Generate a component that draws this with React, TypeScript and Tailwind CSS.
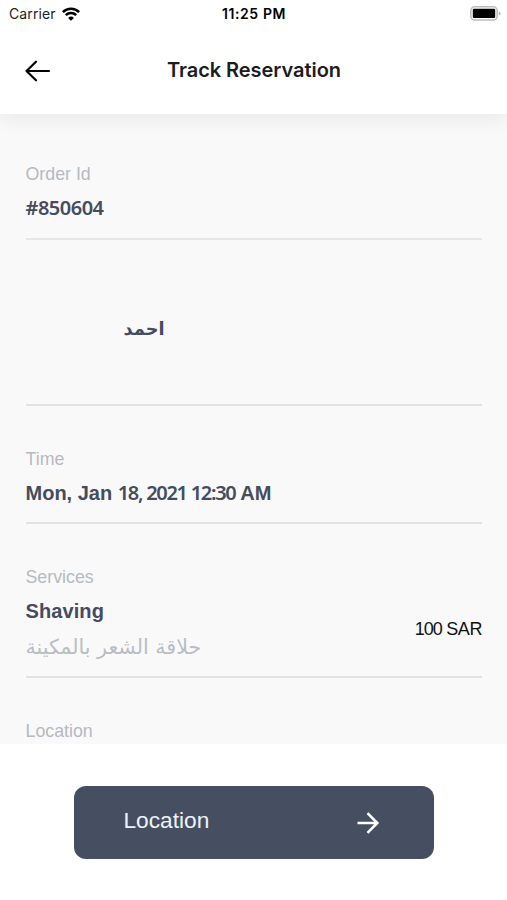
import type { ReactNode } from "react";

function Label({ children }: { children: ReactNode }) {
  return <p className="text-[17.8px] leading-6 text-[#b5b9c2]">{children}</p>;
}

function StatusBar() {
  return (
    <div className="grid h-[27px] grid-cols-3 items-center pr-[6px] pl-[9px] font-['Inter',sans-serif] text-black">
      <div className="flex items-center gap-[6px]">
        <span className="text-[14px] tracking-[0.1px] text-[#222222]">Carrier</span>
        <svg width="18" height="14" viewBox="0 0 18 14" fill="none" stroke="currentColor" strokeWidth="2.5">
          <path d="M.9 5.1a11.6 11.6 0 0 1 16.2 0" />
          <path d="M3.8 8.2a7.4 7.4 0 0 1 10.4 0" />
          <path d="M9 13.8 6.1 10.9a4.1 4.1 0 0 1 5.8 0Z" fill="currentColor" stroke="none" />
        </svg>
      </div>
      <span className="mr-[2px] text-center text-[14px] font-semibold tracking-[0.6px] whitespace-nowrap">11:25 PM</span>
      <svg className="justify-self-end" width="31" height="15" viewBox="0 0 31 15">
        <rect x=".8" y=".8" width="26.4" height="13.2" rx="4" fill="#fff" stroke="#bdbdbd" strokeWidth="1.6" />
        <rect x="2.8" y="2.8" width="22.4" height="9.2" rx="1" fill="#000" />
        <path d="M28.8 5.2q1.8.8 1.8 2.2t-1.8 2.2Z" fill="#b5b5b5" />
      </svg>
    </div>
  );
}

export default function App() {
  return (
    <div className="flex h-[900px] w-[507px] flex-col overflow-hidden bg-white font-['Liberation_Sans',sans-serif]">
      <header className="z-10 h-[114px] shrink-0 bg-white shadow-[0_8px_16px_rgba(0,0,0,0.055)]">
        <StatusBar />
        <div className="grid h-[87px] grid-cols-[60px_1fr_60px] items-center pl-6">
          <svg width="27" height="22" viewBox="0 0 27 22" fill="none" stroke="#000" strokeWidth="2.2" strokeLinecap="round" strokeLinejoin="round">
            <path d="M25 11H2.5M12 1.7 2.5 11l9.5 9.3" />
          </svg>
          <h1 className="-mt-px -ml-[23px] text-center font-['Inter',sans-serif] text-[20px] font-semibold tracking-[-0.05px] text-[#1c1c1e]">
            Track Reservation
          </h1>
        </div>
      </header>

      <main className="h-[630px] shrink-0 overflow-hidden bg-[#f9f9f9] pr-[25px] pl-[25.5px] text-[20px] text-[#454c60]">
        <section className="h-[126px] border-b-2 border-[#e5e6e6] pt-12">
          <Label>Order Id</Label>
          <p className="mt-[10px] font-['Noto_Sans',sans-serif] leading-6 font-semibold tracking-[-0.5px]">#850604</p>
        </section>

        <section className="h-[166px] border-b-2 border-[#e2e3e3] pt-[77px] pl-[98px]">
          <p lang="ar" dir="rtl" className="w-fit font-['DejaVu_Sans',sans-serif] text-[17.8px] leading-6 font-bold">
            احمد
          </p>
        </section>

        <section className="h-[118px] border-b-2 border-[#e2e3e3] pt-[41px]">
          <Label>Time</Label>
          <p className="mt-[10px] leading-6 font-bold whitespace-nowrap">
            Mon, Jan{" "}
            <span className="font-['Noto_Sans',sans-serif] font-semibold tracking-[-1.3px]">18, 2021 12:30</span> AM
          </p>
        </section>

        <section className="flex h-[154px] justify-between border-b-2 border-[#e2e3e3] pt-[41px]">
          <div>
            <Label>Services</Label>
            <p className="mt-[10px] leading-6 font-bold tracking-[0.1px]">Shaving</p>
            <p lang="ar" dir="rtl" className="mt-3 w-fit font-['DejaVu_Sans',sans-serif] text-[20.6px] leading-6 whitespace-nowrap text-[#b9bdc6]">
              حلاقة الشعر بالمكينة
            </p>
          </div>
          <p className="mt-[52px] text-[18px] leading-6 tracking-[-0.4px] text-[#111111]">
            <span className="tracking-[-1.1px]">100</span> SAR
          </p>
        </section>

        <section className="pt-[41px]">
          <Label>Location</Label>
        </section>
      </main>

      <footer className="flex flex-1 justify-center bg-white pt-[42px]">
        <button className="flex h-[73px] w-[360px] items-center justify-between rounded-[12px] bg-[#454f61] pr-[53px] pl-[50px] text-[22.7px] text-[#eef2fb]">
          <span className="-mt-1">Location</span>
          <svg width="24" height="22" viewBox="0 0 24 22" fill="none" stroke="#fff" strokeWidth="2.6">
            <path d="M.5 11h20M10.5 1.2 20.3 11l-9.8 9.8" />
          </svg>
        </button>
      </footer>
    </div>
  );
}
